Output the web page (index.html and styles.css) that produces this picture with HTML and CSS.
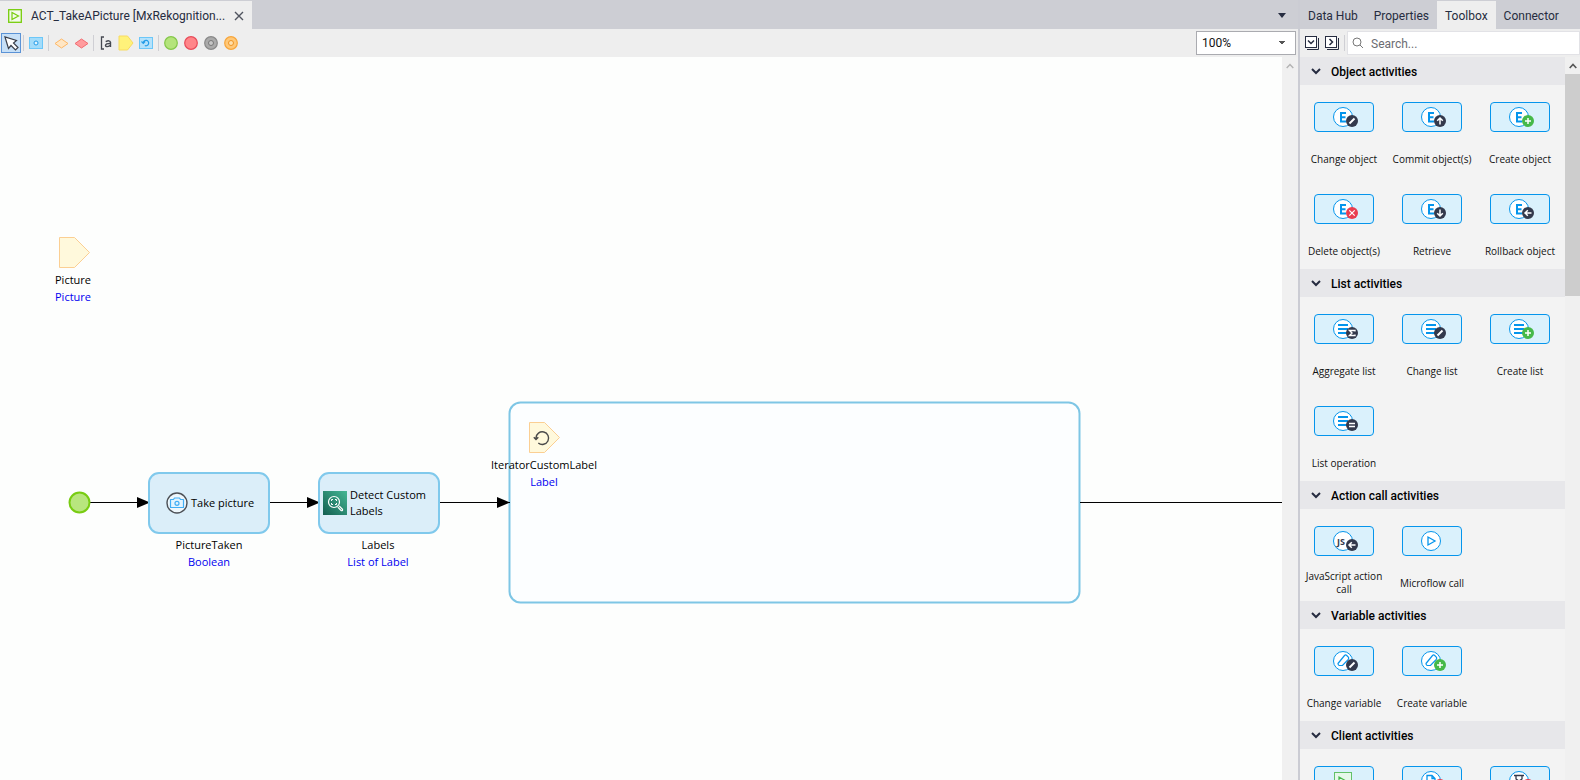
FILE: index.html
```html
<!DOCTYPE html>
<html lang="en">
<head>
<meta charset="utf-8">
<title>ACT_TakeAPicture</title>
<link rel="stylesheet" href="styles.css">
</head>
<body>
<svg class="defs" aria-hidden="true">
  <defs>
    <symbol id="disc" viewBox="0 0 28 22"><circle cx="11" cy="11" r="9.5" fill="#fff" stroke="#0595ec"/></symbol>
    <symbol id="entity" viewBox="0 0 28 22"><use href="#disc"/><path d="M14 7H9v8.500H14M9 11.200H13.500" fill="none" stroke="#0595ec" stroke-width="2"/></symbol>
    <symbol id="list" viewBox="0 0 28 22"><use href="#disc"/><path d="M6 7h10M6 11h10M6 15h10" fill="none" stroke="#0595ec" stroke-width="2"/></symbol>
    <symbol id="variable" viewBox="0 0 28 22"><use href="#disc"/><path d="M6 13.500 12.500 5.500q1-1 2-.2l2 2q.5 1-.2 2L10.500 15.500H7.200Q6 15 6 13.500Z" fill="none" stroke="#0595ec" stroke-width="1.200"/></symbol>
    <symbol id="b-edit" viewBox="0 0 28 22"><circle cx="20" cy="15" r="6" fill="#33394c"/><path d="m17.500 17.500 5-5" stroke="#fff" stroke-width="2"/></symbol>
    <symbol id="b-up" viewBox="0 0 28 22"><circle cx="20" cy="15" r="6" fill="#33394c"/><path d="M20 18.500V12.500M17.200 14.800 20 12l2.800 2.800" fill="none" stroke="#fff" stroke-width="1.500"/></symbol>
    <symbol id="b-down" viewBox="0 0 28 22"><circle cx="20" cy="15" r="6" fill="#33394c"/><path d="M20 11.500v6M17.200 15.200 20 18l2.800-2.800" fill="none" stroke="#fff" stroke-width="1.500"/></symbol>
    <symbol id="b-left" viewBox="0 0 28 22"><circle cx="20" cy="15" r="6" fill="#33394c"/><path d="M23.500 15h-6M19.800 12.200 17 15l2.800 2.800" fill="none" stroke="#fff" stroke-width="1.500"/></symbol>
    <symbol id="b-add" viewBox="0 0 28 22"><circle cx="20" cy="15" r="6" fill="#46b949"/><path d="M20 12v6M17 15h6" stroke="#fff" stroke-width="1.500"/></symbol>
    <symbol id="b-del" viewBox="0 0 28 22"><circle cx="20" cy="15" r="6" fill="#ea3d4f"/><path d="m17.300 12.300 5.400 5.400M22.700 12.300l-5.400 5.400" stroke="#fff" stroke-width="1.200"/></symbol>
    <symbol id="b-sum" viewBox="0 0 28 22"><circle cx="20" cy="15" r="6" fill="#33394c"/><path d="M23 13.500V12.500H17.500L20 15l-2.500 2.500H23v-1" fill="none" stroke="#fff" stroke-width="1.400"/></symbol>
    <symbol id="b-eq" viewBox="0 0 28 22"><circle cx="20" cy="15" r="6" fill="#33394c"/><path d="M17 13.500h6M17 16.500h6" stroke="#fff" stroke-width="1.500"/></symbol>
    <symbol id="chev" viewBox="0 0 12 12"><path d="m2 3 4 4 4-4" fill="none" stroke="#262c40" stroke-width="2"/></symbol>
  </defs>
</svg>

<div class="app">
  <main class="editor">
    <header class="strip">
      <div class="doc-tab">
        <svg width="14" height="14" viewBox="0 0 14 14"><rect x=".7" y=".7" width="12.600" height="12.600" fill="#f3faea" stroke="#76cc0a" stroke-width="1.300"/><path d="M4 3.500v7L10.500 7Z" fill="none" stroke="#76cc0a" stroke-width="1.200"/></svg>
        <span class="doc-name">ACT_TakeAPicture [MxRekognition...</span>
        <button class="plain" aria-label="Close tab"><svg width="10" height="10" viewBox="0 0 10 10"><path d="m1 1 8 8M9 1 1 9" stroke="#50545f" stroke-width="1.400"/></svg></button>
      </div>
      <button class="plain tab-list" aria-label="Open documents"><svg width="8" height="5"><path d="M0 0h8L4 5Z" fill="#262c40"/></svg></button>
    </header>

    <div class="toolbar">
      <button class="tool selected" aria-label="Select"><svg width="18" height="18" viewBox="0 0 18 18"><path d="M3 3 6.500 14.500 9 11.500 13.500 16 16 13.500 11.500 9 14.500 6.500Z" fill="#fff" stroke="#3b3f4a" stroke-width="1.200"/></svg></button>
      <span class="sep"></span>
      <button class="tool" aria-label="Activity"><svg width="14" height="12"><rect x=".5" y=".5" width="13" height="11" fill="#a3dcfa" stroke="#6cc7f8"/><circle cx="7" cy="6" r="2" fill="#e3f5fe" stroke="#239ce8"/></svg></button>
      <span class="sep"></span>
      <button class="tool" aria-label="Decision"><svg width="15" height="11"><path d="M1 5.500 7.500 1 14 5.500 7.500 10Z" fill="#ffe6c4" stroke="#ffb866"/></svg></button>
      <button class="tool" aria-label="Object type decision"><svg width="15" height="11"><path d="M1 5.500 7.500 1 14 5.500 7.500 10Z" fill="#ff9c9e" stroke="#f36a70"/></svg></button>
      <span class="sep"></span>
      <button class="tool" aria-label="Annotation"><svg width="13" height="14" viewBox="0 0 13 14"><path d="M4 1H1.500v12H4" fill="none" stroke="#454850" stroke-width="1.300"/><path d="M5.700 5.700q3.800-2 4.800.5v4.800M10.500 7.500Q5.500 7.300 5.500 9.500q.5 2.300 5-.2" fill="none" stroke="#454850" stroke-width="1.400"/></svg></button>
      <button class="tool" aria-label="Parameter"><svg width="16" height="16"><path d="M1 1h8.500l5.500 7-5.500 7H1Z" fill="#fff27a" stroke="#f8db62"/></svg></button>
      <button class="tool" aria-label="Loop"><svg width="14" height="12" viewBox="0 0 14 12"><rect x=".5" y=".5" width="13" height="11" fill="#b5e2fb" stroke="#6cc7f8"/><path d="M2.500 4.500 4.300 6.300 6 4.500M4.300 6a2.700 2.700 0 1 1 1.500 2.500" fill="none" stroke="#239ce8" stroke-width="1.200"/></svg></button>
      <span class="sep"></span>
      <button class="tool" aria-label="Start event"><svg width="14" height="14"><circle cx="7" cy="7" r="6.300" fill="#b4e47b" stroke="#84c748" stroke-width="1.200"/></svg></button>
      <button class="tool" aria-label="End event"><svg width="14" height="14"><circle cx="7" cy="7" r="6.300" fill="#ff8589" stroke="#e84a58" stroke-width="1.200"/></svg></button>
      <button class="tool" aria-label="Break event"><svg width="14" height="14"><circle cx="7" cy="7" r="6.300" fill="#aaa" stroke="#888" stroke-width="1.200"/><circle cx="7" cy="7" r="2.500" fill="#c6c6c6" stroke="#777"/></svg></button>
      <button class="tool" aria-label="Continue event"><svg width="14" height="14"><circle cx="7" cy="7" r="6.300" fill="#ffc878" stroke="#f7a53a" stroke-width="1.200"/><circle cx="7" cy="7" r="2.500" fill="#ffe0ad" stroke="#ee9424"/></svg></button>
      <select class="zoom" aria-label="Zoom"><option>100%</option></select>
    </div>

    <div class="workspace">
      <div class="canvas">
        <svg class="edges" aria-hidden="true">
          <rect x="509.500" y="345.500" width="570" height="200" rx="11" fill="#fcfeff" stroke="#7ec6e5" stroke-width="2"/>
          <path d="M90 445.500h60M270 445.500h50M440 445.500h70M1080 445.500H3000" stroke="#000" fill="none"/>
          <path d="M137 440v11l13-5.500ZM307 440v11l13-5.500ZM497 440v11l13-5.500Z"/>
          <circle cx="79.500" cy="445.500" r="10" fill="#b8e67e" stroke="#78cc12" stroke-width="2"/>
          <path d="M59.500 180.500h15l15 15-15 15h-15Z" fill="#fff9dc" stroke="#fbcf93"/>
          <path d="M529.500 365.500h15l15 15-15 15h-15Z" fill="#fff9dc" stroke="#fbcf93"/>
          <path d="M536 381a6.300 6.300 0 1 1 2.300 5M533.800 380.200l2.200 2.300 2.300-2.300" fill="none" stroke="#4a4a4a" stroke-width="1.400"/>
        </svg>
        <div class="caption at-picture">Picture<span class="type">Picture</span></div>
        <div class="caption at-iterator">IteratorCustomLabel<span class="type">Label</span></div>
        <div class="activity at-take">
          <svg width="22" height="22" viewBox="0 0 22 22"><circle cx="11" cy="11" r="10" fill="#eef7fc" stroke="#4c5056" stroke-width="1.400"/><path d="M4.500 7.500h3l1-1.500h5l1 1.500h3v8h-13Z" fill="#e3f4fe" stroke="#42aef5" stroke-width="1.200" stroke-linejoin="round"/><circle cx="11" cy="11.300" r="2" fill="none" stroke="#42aef5" stroke-width="1.200"/></svg>
          <span>Take picture</span>
        </div>
        <div class="caption at-taken">PictureTaken<span class="type">Boolean</span></div>
        <div class="activity detect at-detect">
          <svg width="24" height="24" viewBox="0 0 24 24"><defs><linearGradient id="teal" x1="0" y1="1" x2="1" y2="0"><stop offset="0" stop-color="#135e50"/><stop offset="1" stop-color="#45b795"/></linearGradient></defs><rect width="24" height="24" fill="url(#teal)"/><circle cx="11" cy="11" r="5.500" fill="none" stroke="#fff" stroke-width="1.200"/><path d="M8.500 10V8.500H10M12 8.500h1.500V10M13.500 12v1.500H12M10 13.500H8.500V12" fill="none" stroke="#fff"/><path d="m14.800 16.200 3.500 3.500q1.500.3 1.200-1.300L16.200 15" fill="none" stroke="#fff" stroke-width="1.200"/></svg>
          <span>Detect Custom Labels</span>
        </div>
        <div class="caption at-labels">Labels<span class="type">List of Label</span></div>
      </div>
      <div class="scroll"><svg width="8" height="6"><path d="m.7 5 3.300-3.500L7.300 5" fill="none" stroke="#b3b3b3" stroke-width="1.400"/></svg></div>
    </div>
  </main>

  <aside class="panel">
    <nav class="strip tabs">
      <button class="tab">Data Hub</button><button class="tab">Properties</button><button class="tab active">Toolbox</button><button class="tab">Connector</button>
    </nav>
    <div class="searchbar">
      <button class="plain" aria-label="Expand all"><svg width="14" height="14"><path d="M13.500 2v11.500H2" fill="none" stroke="#262c40"/><rect x=".5" y=".5" width="11" height="11" fill="#fff" stroke="#262c40"/><path d="m3 4.500 3 3 3-3" fill="none" stroke="#262c40" stroke-width="1.500"/></svg></button>
      <button class="plain" aria-label="Collapse all"><svg width="14" height="14"><path d="M13.500 2v11.500H2" fill="none" stroke="#262c40"/><rect x=".5" y=".5" width="11" height="11" fill="#fff" stroke="#262c40"/><path d="m4.500 3 3 3-3 3" fill="none" stroke="#262c40" stroke-width="1.500"/></svg></button>
      <span class="sep"></span>
      <label class="search"><svg width="12" height="12"><circle cx="5" cy="5" r="4" fill="none" stroke="#777"/><path d="m8 8 3 3" stroke="#777"/></svg><input type="text" placeholder="Search..." aria-label="Search"></label>
    </div>
    <div class="toolbox">
      <div class="groups">
        <section>
          <h2><button class="fold"><svg width="12" height="12"><use href="#chev"/></svg>Object activities</button></h2>
          <div class="grid">
            <button class="item"><span class="tile"><svg class="ico"><use href="#entity"/><use href="#b-edit"/></svg></span><span class="name">Change object</span></button>
            <button class="item"><span class="tile"><svg class="ico"><use href="#entity"/><use href="#b-up"/></svg></span><span class="name">Commit object(s)</span></button>
            <button class="item"><span class="tile"><svg class="ico"><use href="#entity"/><use href="#b-add"/></svg></span><span class="name">Create object</span></button>
            <button class="item"><span class="tile"><svg class="ico"><use href="#entity"/><use href="#b-del"/></svg></span><span class="name">Delete object(s)</span></button>
            <button class="item"><span class="tile"><svg class="ico"><use href="#entity"/><use href="#b-down"/></svg></span><span class="name">Retrieve</span></button>
            <button class="item"><span class="tile"><svg class="ico"><use href="#entity"/><use href="#b-left"/></svg></span><span class="name">Rollback object</span></button>
          </div>
        </section>
        <section>
          <h2><button class="fold"><svg width="12" height="12"><use href="#chev"/></svg>List activities</button></h2>
          <div class="grid">
            <button class="item"><span class="tile"><svg class="ico"><use href="#list"/><use href="#b-sum"/></svg></span><span class="name">Aggregate list</span></button>
            <button class="item"><span class="tile"><svg class="ico"><use href="#list"/><use href="#b-edit"/></svg></span><span class="name">Change list</span></button>
            <button class="item"><span class="tile"><svg class="ico"><use href="#list"/><use href="#b-add"/></svg></span><span class="name">Create list</span></button>
            <button class="item"><span class="tile"><svg class="ico"><use href="#list"/><use href="#b-eq"/></svg></span><span class="name">List operation</span></button>
          </div>
        </section>
        <section>
          <h2><button class="fold"><svg width="12" height="12"><use href="#chev"/></svg>Action call activities</button></h2>
          <div class="grid">
            <button class="item"><span class="tile"><svg class="ico" viewBox="0 0 28 22"><use href="#disc"/><text x="5" y="15" class="js">JS</text><use href="#b-left"/></svg></span><span class="name">JavaScript action call</span></button>
            <button class="item"><span class="tile"><svg class="ico" viewBox="0 0 28 22"><use href="#disc"/><path d="M8 7v8l7-4Z" fill="none" stroke="#0595ec" stroke-width="1.300"/></svg></span><span class="name">Microflow call</span></button>
          </div>
        </section>
        <section>
          <h2><button class="fold"><svg width="12" height="12"><use href="#chev"/></svg>Variable activities</button></h2>
          <div class="grid">
            <button class="item"><span class="tile"><svg class="ico"><use href="#variable"/><use href="#b-edit"/></svg></span><span class="name">Change variable</span></button>
            <button class="item"><span class="tile"><svg class="ico"><use href="#variable"/><use href="#b-add"/></svg></span><span class="name">Create variable</span></button>
          </div>
        </section>
        <section>
          <h2><button class="fold"><svg width="12" height="12"><use href="#chev"/></svg>Client activities</button></h2>
          <div class="grid">
            <button class="item" aria-label="Call nanoflow"><span class="tile"><svg class="ico" viewBox="0 0 28 22"><rect x="2.500" y="2.500" width="17" height="17" fill="#e6f8ea" stroke="#62c168"/><path d="M7 7v8l7-4Z" fill="none" stroke="#46b949" stroke-width="1.200"/></svg></span></button>
            <button class="item" aria-label="Close page"><span class="tile"><svg class="ico" viewBox="0 0 28 22"><use href="#disc"/><path d="M7 16V5.500h5l3 3V16ZM12 5.500v3h3" fill="none" stroke="#0595ec" stroke-width="1.300"/><use href="#b-del"/></svg></span></button>
            <button class="item" aria-label="Delete"><span class="tile"><svg class="ico" viewBox="0 0 28 22"><use href="#disc"/><path d="M6 5.500h10M8 5.500V9l3 2-3 3v3M14 5.500V9l-3 2 3 3v3" fill="none" stroke="#33394c" stroke-width="1.300"/><use href="#b-del"/></svg></span></button>
          </div>
        </section>
      </div>
      <div class="scroll side"><svg width="8" height="6"><path d="m.7 5 3.300-3.500L7.300 5" fill="none" stroke="#555" stroke-width="1.600"/></svg><span class="thumb"></span></div>
    </div>
  </aside>
</div>
</body>
</html>
```

FILE: styles.css
```css
* { box-sizing: border-box; }
body { margin: 0; font: 12px/16px Roboto, "Open Sans", sans-serif; color: #262c40; }
button { font: inherit; color: inherit; border: 0; padding: 0; margin: 0; background: none; }
svg { display: block; flex: none; }
.defs { position: absolute; width: 0; height: 0; }

.app { display: flex; height: 100vh; overflow: hidden; background: #eeeeee; }
.editor { flex: 1; min-width: 0; display: flex; flex-direction: column; }
.panel { flex: none; width: 282px; display: flex; flex-direction: column; border-left: 2px solid #cbccd3; }

.strip { flex: none; display: flex; align-items: stretch; height: 29px; padding-top: 1px; background: #cdced4; }
.doc-tab { display: flex; align-items: center; gap: 9px; width: 252px; padding: 2px 11px 0 8px; background: #eeeeee; }
.doc-name { flex: 1; white-space: nowrap; }
.plain { display: flex; align-items: center; justify-content: center; }
.tab-list { margin-left: auto; padding: 0 12px; }

.toolbar { flex: none; display: flex; align-items: center; height: 28px; padding: 0 2px 0 1px; }
.tool { display: flex; align-items: center; justify-content: center; width: 20px; height: 20px; }
.tool.selected { background: #c7e0f7; border: 1px solid #5b93d6; }
.sep { width: 1px; height: 16px; margin: 0 2px; background: #cfcfd4; }
.zoom { width: 100px; height: 24px; margin-left: auto; padding: 0 28px 0 5px; border: 1px solid #aaabb0; border-radius: 0; color: #111; font: inherit; appearance: none;
  background: linear-gradient(to bottom right, #555 50%, transparent 50%) right 10px center / 3px 4px no-repeat, linear-gradient(to bottom left, #555 50%, transparent 50%) right 13px center / 3px 4px no-repeat, #fff; }

.workspace { flex: 1; min-height: 0; display: flex; }
.canvas { position: relative; flex: 1; min-width: 0; overflow: hidden; background: #fdfefd; color: #000; font-family: "Open Sans", "Noto Sans", sans-serif; font-size: 11px; }
.edges { position: absolute; inset: 0; width: 100%; height: 100%; }
.scroll { flex: none; display: flex; flex-direction: column; align-items: center; width: 16px; padding-top: 6px; background: #f0f0f0; }
.caption { position: absolute; width: 120px; text-align: center; line-height: 17px; }
.type { display: block; color: #0000f0; }
.activity { position: absolute; display: flex; align-items: center; gap: 3px; width: 122px; height: 62px; padding: 0 0 1px 16px; border: 2px solid #80c9ec; border-radius: 11px; background: #dbeef9; }
.detect { padding-left: 3px; }
.at-picture { left: 13px; top: 214px; }
.at-iterator { left: 484px; top: 399px; }
.at-take { left: 148px; top: 415px; }
.at-taken { left: 149px; top: 479px; }
.at-detect { left: 318px; top: 415px; }
.at-labels { left: 318px; top: 479px; }

.tab { padding: 2px 8px 0; white-space: nowrap; }
.tab.active { background: #eeeeee; }
.searchbar { flex: none; display: flex; align-items: center; gap: 6px; height: 28px; padding-left: 5px; }
.searchbar .sep { margin: 0 -4px 0 -1px; }
.search { flex: 1; display: flex; align-items: center; gap: 7px; height: 24px; padding-left: 4px; border: 1px solid #e2e2e6; background: #fff; }
.search input { flex: 1; min-width: 0; padding: 1px 0 0; border: 0; outline: 0; background: none; font: inherit; }
.search input::placeholder { color: #6c6c72; opacity: 1; }

.toolbox { flex: 1; min-height: 0; display: flex; }
.groups { flex: 1; min-width: 0; overflow: hidden; background: #f3f3f3; }
h2 { margin: 0; font: inherit; }
.fold { display: flex; align-items: center; gap: 9px; width: 100%; height: 28px; padding: 1px 10px 0; background: #e7e7ea; color: #000; font-weight: 500; }
.grid { display: grid; grid-template-columns: repeat(3, 88px); }
.item { display: flex; flex-direction: column; align-items: center; height: 92px; padding-top: 17px; color: #111; font-family: "Open Sans", "Noto Sans", sans-serif; font-size: 10px; line-height: 13px; }
.tile { display: flex; align-items: center; justify-content: center; flex: none; width: 60px; height: 30px; padding-left: 4px; border: 1px solid #0595ec; border-radius: 4px; background: #daf1fc; }
.ico { width: 28px; height: 22px; }
.js { font: 700 9px "Open Sans", sans-serif; fill: #33394c; }
.name { display: flex; align-items: center; height: 26px; margin-top: 14px; padding: 0 4px; }
.side { width: 15px; gap: 5px; }
.thumb { width: 100%; height: 222px; background: #cdcdcd; }
```
